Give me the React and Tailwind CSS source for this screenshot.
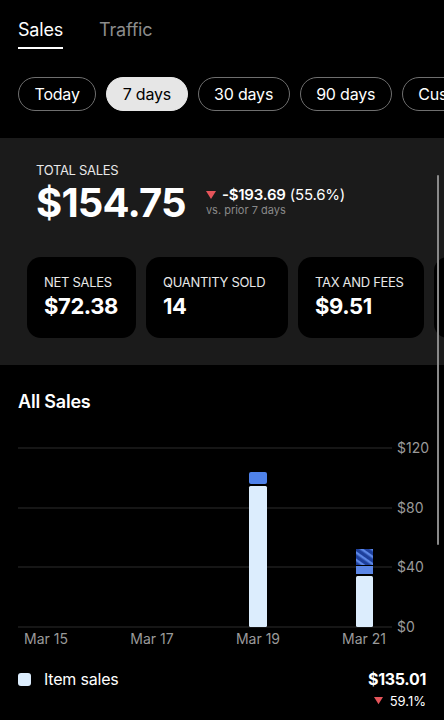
import { useState } from "react";

const ranges = ["Today", "7 days", "30 days", "90 days", "Custom"];

const stats = [
	{ label: "NET SALES", value: "$72.38", w: "w-[109px]" },
	{ label: "QUANTITY SOLD", value: "14", w: "w-[142px]" },
	{ label: "TAX AND FEES", value: "$9.51", w: "w-[126px]" },
	{ label: "ORDERS", value: "9", w: "w-[110px]" },
];

const Triangle = ({ size = 10 }) => (
	<svg width={size} height={size * 0.8} viewBox="0 0 10 8">
		<path d="M0 0 L10 0 L5 8 Z" fill="#e5545a" />
	</svg>
);

const SalesChart = () => {
	const grid = [
		{ y: 7, label: "$120" },
		{ y: 67, label: "$80" },
		{ y: 126, label: "$40" },
		{ y: 186, label: "$0" },
	];
	const days = [
		{ x: 46, label: "Mar 15" },
		{ x: 152, label: "Mar 17" },
		{ x: 258, label: "Mar 19" },
		{ x: 364, label: "Mar 21" },
	];
	return (
		<svg width="444" height="206" viewBox="0 0 444 206" className="block">
			<defs>
				<pattern id="hatch" width="6" height="6" patternUnits="userSpaceOnUse" patternTransform="rotate(35)">
					<rect width="6" height="6" fill="#1d3f9c" />
					<rect width="6" height="2.4" fill="#5b86e6" />
				</pattern>
			</defs>
			{grid.map((g) => (
				<g key={g.label}>
					<line x1="18" x2="392" y1={g.y} y2={g.y} stroke="#2c2c2c" strokeWidth="1" />
					<text x="397" y={g.y + 5} fill="#9a9a9a" fontSize="14" fontFamily="Inter, sans-serif">
						{g.label}
					</text>
				</g>
			))}
			{/* Mar 19 */}
			<rect x="249" y="31" width="18" height="12" rx="2" fill="#4f82ea" />
			<rect x="249" y="45" width="18" height="141" rx="1.5" fill="#dcedfd" />
			{/* Mar 21 */}
			<rect x="356" y="108" width="17" height="16" fill="url(#hatch)" />
			<rect x="356" y="125" width="17" height="8" fill="#5b86e6" />
			<rect x="356" y="135" width="17" height="51" rx="1.5" fill="#dcedfd" />
			{days.map((d) => (
				<text key={d.label} x={d.x} y="203" textAnchor="middle" fill="#9a9a9a" fontSize="14" fontFamily="Inter, sans-serif">
					{d.label}
				</text>
			))}
		</svg>
	);
};

const App = () => {
	const [tab, setTab] = useState("Sales");
	const [range, setRange] = useState("7 days");

	return (
		<div className="relative w-[444px] h-[720px] overflow-hidden bg-black text-white font-['Inter',sans-serif]">
			{/* tabs */}
			<div className="flex gap-[36px] px-[18px] pt-[13px] h-[49px]">
				{["Sales", "Traffic"].map((t) => (
					<button
						key={t}
						onClick={() => setTab(t)}
						className={`h-full text-[18px] leading-[24px] tracking-[-0.2px] border-b-[2px] ${
							tab === t ? "text-white border-white" : "text-[#8c8c8c] border-transparent"
						}`}
					>
						{t}
					</button>
				))}
			</div>

			{/* range pills */}
			<div className="flex gap-[10px] pl-[18px] mt-[28px] whitespace-nowrap">
				{ranges.map((r) => (
					<button
						key={r}
						onClick={() => setRange(r)}
						className={`h-[34px] px-[15.5px] shrink-0 rounded-full text-[16px] tracking-[-0.2px] border ${
							range === r
								? "bg-[#e6e6e6] text-black border-[#e6e6e6]"
								: "bg-black text-white border-[#6f6f6f]"
						}`}
					>
						{r}
					</button>
				))}
			</div>

			{/* totals */}
			<div className="mt-[27px] bg-[#1b1b1b] h-[227px] pt-[24px]">
				<div className="px-[36px]">
					<div className="text-[13px] leading-[16px] tracking-[-0.3px] text-[#e8e8e8]">TOTAL SALES</div>
					<div className="flex items-start gap-[20px] mt-[2px]">
						<div className="text-[40px] leading-[46px] font-bold tracking-[-0.8px]">$154.75</div>
						<div className="pt-[6px]">
							<div className="flex items-center gap-[6px] text-[15px] leading-[18px] tracking-[-0.2px]">
								<Triangle />
								<span>
									<span className="font-semibold">-$193.69</span> (55.6%)
								</span>
							</div>
							<div className="text-[11px] leading-[13px] text-[#8a8a8a]">vs. prior 7 days</div>
						</div>
					</div>
				</div>
				<div className="flex gap-[10px] pl-[27px] mt-[31px]">
					{stats.map((s) => (
						<div key={s.label} className={`${s.w} shrink-0 h-[81px] rounded-[14px] bg-black px-[17px] pt-[17px]`}>
							<div className="text-[13px] leading-[16px] tracking-[-0.3px] text-[#e8e8e8] whitespace-nowrap">{s.label}</div>
							<div className="text-[22px] leading-[28px] font-bold tracking-[-0.4px] mt-[2px]">{s.value}</div>
						</div>
					))}
				</div>
			</div>

			{/* all sales */}
			<div className="pt-[25px]">
				<div className="px-[18px] text-[18px] leading-[24px] font-semibold tracking-[-0.2px]">All Sales</div>
				<div className="mt-[27px]">
					<SalesChart />
				</div>
				<div className="flex justify-between px-[18px] mt-[21px]">
					<div className="flex items-center gap-[13px] h-[22px]">
						<span className="w-[13px] h-[13px] rounded-[3px] bg-[#dcedfd]" />
						<span className="text-[16px] tracking-[-0.2px]">Item sales</span>
					</div>
					<div className="flex flex-col items-end">
						<div className="text-[16px] leading-[22px] font-bold tracking-[-0.3px]">$135.01</div>
						<div className="flex items-center gap-[7px] text-[13px] leading-[18px] mt-[2px]">
							<Triangle size={9} />
							<span>59.1%</span>
						</div>
					</div>
				</div>
			</div>

			{/* scrollbar thumb */}
			<div className="absolute right-[5px] top-[175px] w-[2px] h-[370px] rounded-full bg-[#8a8a8a]" />
		</div>
	);
};

export default App;
